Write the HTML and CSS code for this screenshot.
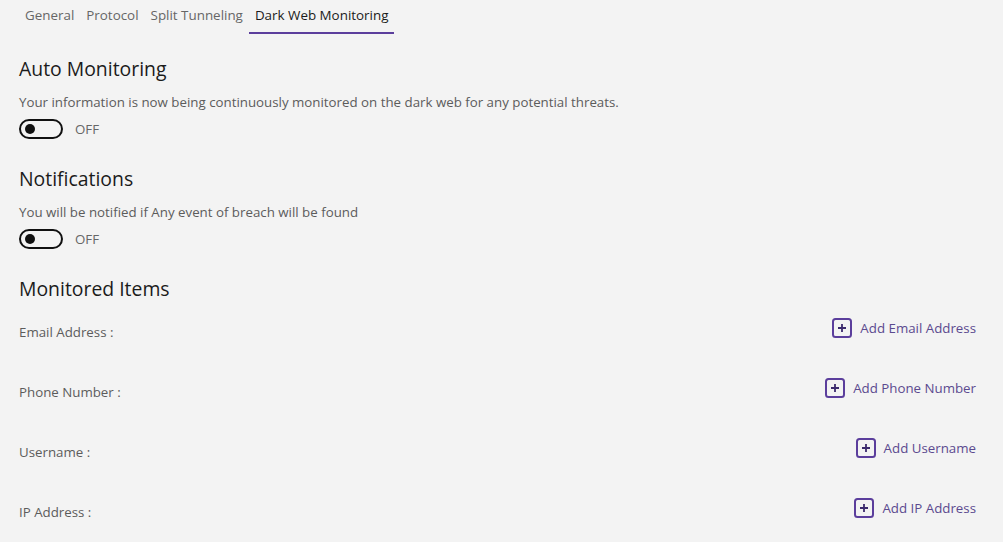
FILE: index.html
```html
<!DOCTYPE html>
<html lang="en">

<head>
    <meta charset="UTF-8">
    <meta name="viewport" content="width=device-width, initial-scale=1.0">
    <title>Dark Web Monitoring</title>
    <link rel="stylesheet" href="styles.css">
</head>

<body>
    <nav class="tabs">
        <a class="tab">General</a>
        <a class="tab">Protocol</a>
        <a class="tab">Split Tunneling</a>
        <a class="tab active">Dark Web Monitoring</a>
    </nav>

    <main class="content">
        <section class="setting">
            <h2>Auto Monitoring</h2>
            <p class="desc">Your information is now being continuously monitored on the dark web for any potential threats.</p>
            <div class="switch-row">
                <span class="switch"><span class="knob"></span></span>
                <span class="switch-label">OFF</span>
            </div>
        </section>

        <section class="setting">
            <h2>Notifications</h2>
            <p class="desc">You will be notified if Any event of breach will be found</p>
            <div class="switch-row">
                <span class="switch"><span class="knob"></span></span>
                <span class="switch-label">OFF</span>
            </div>
        </section>

        <section class="monitored">
            <h2>Monitored Items</h2>
            <div class="item-row">
                <span class="item-label">Email Address :</span>
                <button class="add-button">
                    <svg class="plus-box" width="20" height="20" viewBox="0 0 20 20"><rect x="1" y="1" width="18" height="18" rx="2.5"/><path d="M10 6v8M6 10h8"/></svg>
                    Add Email Address
                </button>
            </div>
            <div class="item-row">
                <span class="item-label">Phone Number :</span>
                <button class="add-button">
                    <svg class="plus-box" width="20" height="20" viewBox="0 0 20 20"><rect x="1" y="1" width="18" height="18" rx="2.5"/><path d="M10 6v8M6 10h8"/></svg>
                    Add Phone Number
                </button>
            </div>
            <div class="item-row">
                <span class="item-label">Username :</span>
                <button class="add-button">
                    <svg class="plus-box" width="20" height="20" viewBox="0 0 20 20"><rect x="1" y="1" width="18" height="18" rx="2.5"/><path d="M10 6v8M6 10h8"/></svg>
                    Add Username
                </button>
            </div>
            <div class="item-row">
                <span class="item-label">IP Address :</span>
                <button class="add-button">
                    <svg class="plus-box" width="20" height="20" viewBox="0 0 20 20"><rect x="1" y="1" width="18" height="18" rx="2.5"/><path d="M10 6v8M6 10h8"/></svg>
                    Add IP Address
                </button>
            </div>
        </section>
    </main>
</body>

</html>
```

FILE: styles.css
```css
body {
    font-family: "Open Sans", "Noto Sans", sans-serif;
    margin: 0;
    background-color: #f3f3f3;
    color: #1b1b1b;
    overflow: hidden;
}

/* Pestañas superiores */
.tabs {
    display: flex;
    padding-left: 19px;
    height: 34px;
}

.tab {
    padding: 6px 6px 0;
    font-size: 13.4px;
    line-height: 18px;
    color: #666;
    border-bottom: 2px solid transparent;
    box-sizing: border-box;
}

.tab.active {
    color: #1b1b1b;
    border-bottom-color: #5b3e9c;
}

.content {
    padding: 22px 27px 0 19px;
}

h2 {
    margin: 0;
    font-size: 19.4px;
    font-weight: normal;
    line-height: 26px;
    color: #1b1b1b;
}

.setting {
    margin-bottom: 27px;
}

.desc {
    margin: 11px 0 8px;
    font-size: 13.3px;
    line-height: 18px;
    color: #5c5c5c;
}

.switch-row {
    display: flex;
    align-items: center;
    gap: 12px;
}

.switch {
    display: flex;
    align-items: center;
    width: 44px;
    height: 20px;
    border: 2px solid #111;
    border-radius: 10px;
    box-sizing: border-box;
    padding-left: 4px;
}

.knob {
    width: 10px;
    height: 10px;
    border-radius: 50%;
    background-color: #111;
}

.switch-label {
    font-size: 13.3px;
    color: #666;
}

.item-row {
    display: flex;
    justify-content: space-between;
    align-items: center;
    height: 60px;
}

.item-label {
    font-size: 13.3px;
    color: #5c5c5c;
}

.add-button {
    display: flex;
    align-items: center;
    gap: 8px;
    margin-bottom: 8px;
    padding: 0;
    border: none;
    background: none;
    font-family: inherit;
    font-size: 13.3px;
    color: #5b4a8f;
    cursor: pointer;
}

.plus-box {
    fill: none;
    stroke: #5b3e9c;
    stroke-width: 2;
}

.plus-box path {
    stroke: #3c2a6e;
    stroke-width: 1.8;
}
```
